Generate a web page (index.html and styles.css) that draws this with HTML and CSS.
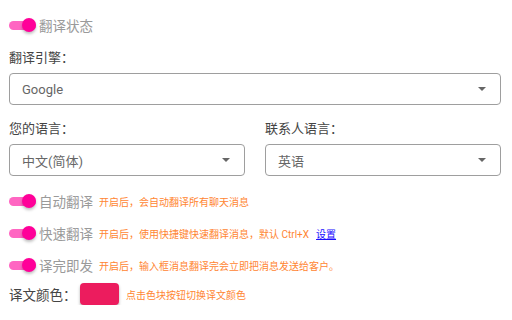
FILE: index.html
```html
<!DOCTYPE html>
<html lang="zh-CN">
<head>
<meta charset="utf-8">
<title>翻译设置</title>
<link rel="stylesheet" href="styles.css">
</head>
<body>
<div class="settings">

  <!-- ===== 翻译状态 ===== -->
  <label class="switch-row first">
    <span class="switch"><span class="track"></span><span class="thumb"></span></span>
    <span class="switch-label">翻译状态</span>
  </label>

  <!-- ===== 翻译引擎 ===== -->
  <div class="field engine">
    <div class="field-label">翻译引擎：</div>
    <div class="select">
      <span class="select-value">Google</span>
      <span class="caret"></span>
    </div>
  </div>

  <!-- ===== 语言 ===== -->
  <div class="cols">
    <div class="field">
      <div class="field-label">您的语言：</div>
      <div class="select">
        <span class="select-value">中文(简体)</span>
        <span class="caret"></span>
      </div>
    </div>
    <div class="field">
      <div class="field-label">联系人语言：</div>
      <div class="select">
        <span class="select-value">英语</span>
        <span class="caret"></span>
      </div>
    </div>
  </div>

  <!-- ===== 开关 ===== -->
  <label class="switch-row after-cols">
    <span class="switch"><span class="track"></span><span class="thumb"></span></span>
    <span class="switch-label">自动翻译</span>
    <span class="hint">开启后，会自动翻译所有聊天消息</span>
  </label>

  <label class="switch-row">
    <span class="switch"><span class="track"></span><span class="thumb"></span></span>
    <span class="switch-label">快速翻译</span>
    <span class="hint">开启后，使用快捷键快速翻译消息，默认 Ctrl+X</span>
    <a class="link" href="#">设置</a>
  </label>

  <label class="switch-row">
    <span class="switch"><span class="track"></span><span class="thumb"></span></span>
    <span class="switch-label">译完即发</span>
    <span class="hint">开启后，输入框消息翻译完会立即把消息发送给客户。</span>
  </label>

  <!-- ===== 译文颜色 ===== -->
  <div class="color-row">
    <span class="color-label">译文颜色：</span>
    <button class="swatch"></button>
    <span class="hint">点击色块按钮切换译文颜色</span>
  </div>

</div>
</body>
</html>
```

FILE: styles.css
```css
/* ---------- BASE ---------- */
:root{
  --pink:#ff0099;
  --pink-light:#ff66c2;
  --text:#444;
  --muted:#9a9a9a;
  --orange:#ff8532;
  --border:#9e9e9e;
}
*{margin:0;padding:0;box-sizing:border-box;}
body{background:#fff;color:var(--text);
  font-family:Roboto,"Noto Sans CJK SC",sans-serif;font-size:13px;}
.settings{padding:0 11px 0 9px;}

/* ---------- SWITCH ---------- */
.switch-row{display:flex;align-items:center;height:20px;margin-top:12px;cursor:pointer;}
.switch-row.first{margin-top:15px;}
.switch-row.after-cols{margin-top:15px;}
.switch{position:relative;width:30px;height:20px;flex:none;}
.switch .track{position:absolute;left:0;top:6px;width:27px;height:9px;border-radius:5px;background:var(--pink-light);}
.switch .thumb{position:absolute;left:13px;top:3px;width:14px;height:14px;border-radius:50%;
  background:var(--pink);box-shadow:0 2px 3px rgba(0,0,0,.25);}
.switch-label{font-size:13.5px;color:var(--muted);}
.hint{font-size:10px;color:var(--orange);margin-left:6px;}
.link{font-size:10px;color:#1a0dff;margin-left:7px;}

/* ---------- SELECT ---------- */
.field.engine{margin-top:15px;}
.field-label{font-size:13px;line-height:16px;color:var(--text);}
.select{display:flex;align-items:center;justify-content:space-between;height:32px;margin-top:7px;
  border:1px solid var(--border);border-radius:4px;padding:0 14px 0 12px;}
.select-value{font-size:13px;color:#666;}
.caret{width:0;height:0;border-left:4px solid transparent;border-right:4px solid transparent;border-top:4px solid #666;}
.cols{display:grid;grid-template-columns:1fr 1fr;gap:20px;margin-top:16px;}

/* ---------- COLOR ---------- */
.color-row{display:flex;align-items:center;margin-top:8px;}
.color-label{font-size:13.5px;color:var(--text);width:71px;}
.swatch{width:39px;height:22px;border:none;border-radius:4px;background:#ec1c5e;
  box-shadow:0 2px 3px rgba(0,0,0,.3);cursor:pointer;}
.color-row .hint{margin-left:7px;}
```
